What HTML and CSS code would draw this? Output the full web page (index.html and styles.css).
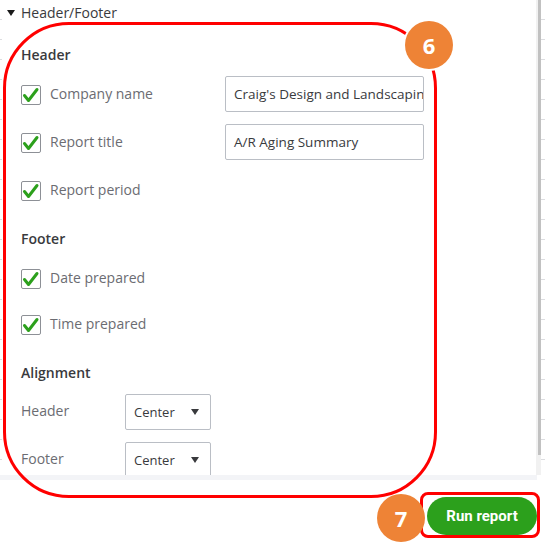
FILE: index.html
```html
<!DOCTYPE html>
<html>
<head>
<meta charset="utf-8">
<link rel="stylesheet" href="styles.css">
</head>
<body>
<div class="page">
  <div class="panel">
    <div class="ticks"></div>
    <div class="content">
      <div class="toggle"><span class="tri"></span><span>Header/Footer</span></div>
      <div class="heading h-header">Header</div>
      <div class="row r1">
        <div class="check-cell"><span class="cb"><svg viewBox="0 0 20 20" width="20" height="20"><path d="M3.5 10.5 L7.5 15.5 L16 4.5" fill="none" stroke="#2ca01c" stroke-width="3" stroke-linecap="round" stroke-linejoin="round"/></svg></span><span class="label">Company name</span></div>
        <div class="input">Craig's Design and Landscaping Services</div>
      </div>
      <div class="row r2">
        <div class="check-cell"><span class="cb"><svg viewBox="0 0 20 20" width="20" height="20"><path d="M3.5 10.5 L7.5 15.5 L16 4.5" fill="none" stroke="#2ca01c" stroke-width="3" stroke-linecap="round" stroke-linejoin="round"/></svg></span><span class="label">Report title</span></div>
        <div class="input">A/R Aging Summary</div>
      </div>
      <div class="row r3">
        <div class="check-cell"><span class="cb"><svg viewBox="0 0 20 20" width="20" height="20"><path d="M3.5 10.5 L7.5 15.5 L16 4.5" fill="none" stroke="#2ca01c" stroke-width="3" stroke-linecap="round" stroke-linejoin="round"/></svg></span><span class="label">Report period</span></div>
      </div>
      <div class="heading h-footer">Footer</div>
      <div class="row r4">
        <div class="check-cell"><span class="cb"><svg viewBox="0 0 20 20" width="20" height="20"><path d="M3.5 10.5 L7.5 15.5 L16 4.5" fill="none" stroke="#2ca01c" stroke-width="3" stroke-linecap="round" stroke-linejoin="round"/></svg></span><span class="label">Date prepared</span></div>
      </div>
      <div class="row r5">
        <div class="check-cell"><span class="cb"><svg viewBox="0 0 20 20" width="20" height="20"><path d="M3.5 10.5 L7.5 15.5 L16 4.5" fill="none" stroke="#2ca01c" stroke-width="3" stroke-linecap="round" stroke-linejoin="round"/></svg></span><span class="label">Time prepared</span></div>
      </div>
      <div class="heading h-align">Alignment</div>
      <div class="arow a1">
        <span class="alabel">Header</span>
        <div class="select"><span>Center</span><span class="arrow"></span></div>
      </div>
      <div class="arow a2">
        <span class="alabel">Footer</span>
        <div class="select"><span>Center</span><span class="arrow"></span></div>
      </div>
    </div>
    <div class="track"><div class="thumb"></div></div>
    <div class="ticks right"></div>
  </div>
  <div class="band"></div>
  <div class="footer">
    <button class="run">Run report</button>
  </div>
</div>
<div class="annot-box"></div>
<div class="badge b6">6</div>
<div class="annot-btn"></div>
<div class="badge b7">7</div>
</body>
</html>
```
FILE: styles.css
```css
html, body {
  margin: 0;
  padding: 0;
  background: #fff;
}
body {
  width: 545px;
  height: 544px;
  overflow: hidden;
  position: relative;
  font-family: "Open Sans", "Liberation Sans", sans-serif;
  font-size: 14px;
  color: #393a3d;
}
.page {
  display: flex;
  flex-direction: column;
  height: 544px;
}
.panel {
  height: 475px;
  flex: none;
  display: flex;
  overflow: hidden;
}
.ticks {
  width: 2px;
  flex: none;
  background: repeating-linear-gradient(to bottom, transparent 0, transparent 19px, #dcdde0 19px, #dcdde0 20px);
}
.ticks.right {
  width: 4px;
  background: repeating-linear-gradient(to bottom, transparent 0, transparent 19px, #dcdde0 19px, #dcdde0 20px);
}
.content {
  flex: 1;
  padding-left: 19px;
  display: flex;
  flex-direction: column;
}
.content > * {
  flex: none;
}
.track {
  width: 5px;
  flex: none;
  background: #f1f1f1;
  display: flex;
  justify-content: flex-end;
}
.thumb {
  width: 3px;
  height: 455px;
  background: #c1c1c1;
}
.toggle {
  height: 24px;
  display: flex;
  align-items: center;
  gap: 6px;
  margin-left: -14px;
  color: #393a3d;
}
.tri {
  width: 0;
  height: 0;
  border-left: 4px solid transparent;
  border-right: 4px solid transparent;
  border-top: 6px solid #1a1a1a;
  margin-top: 1px;
}
.heading {
  height: 20px;
  line-height: 20px;
  font-weight: 600;
  color: #393a3d;
}
.h-header { margin-top: 21px; }
.h-footer { margin-top: 21px; }
.h-align { margin-top: 21px; }
.row {
  height: 36px;
  display: flex;
  align-items: center;
}
.r1 { margin-top: 11px; }
.r2 { margin-top: 12px; }
.r3 { margin-top: 12px; }
.r4 { margin-top: 11px; }
.r5 { margin-top: 10px; }
.check-cell {
  width: 204px;
  display: flex;
  align-items: center;
  gap: 9px;
}
.cb {
  width: 20px;
  height: 20px;
  box-sizing: border-box;
  border: 1px solid #8d9096;
  border-radius: 2px;
  display: flex;
  align-items: center;
  justify-content: center;
  margin-top: 2px;
}
.cb svg {
  flex: none;
}
.label {
  color: #6b6c72;
  margin-top: -2px;
}
.input {
  width: 199px;
  height: 36px;
  box-sizing: border-box;
  border: 1px solid #babec5;
  border-radius: 2px;
  padding: 0 8px;
  line-height: 34px;
  white-space: nowrap;
  overflow: hidden;
  color: #393a3d;
  font-size: 13.5px;
}
.arow {
  height: 36px;
  display: flex;
  align-items: center;
  margin-top: 12px;
}
.a1 { margin-top: 11px; }
.alabel {
  width: 104px;
  color: #6b6c72;
  margin-top: -4px;
}
.select {
  width: 86px;
  height: 36px;
  box-sizing: border-box;
  border: 1px solid #babec5;
  border-radius: 2px;
  display: flex;
  align-items: center;
  justify-content: space-between;
  padding: 0 11px 0 8px;
  font-size: 13px;
  color: #393a3d;
}
.arrow {
  width: 0;
  height: 0;
  border-left: 4px solid transparent;
  border-right: 4px solid transparent;
  border-top: 6px solid #393a3d;
}
.band {
  height: 5px;
  flex: none;
  background: #f3f4f7;
  margin-right: 8px;
}
.footer {
  flex: 1;
  display: flex;
  justify-content: flex-end;
  align-items: flex-start;
  padding: 17px 8px 0 0;
}
.run {
  width: 110px;
  height: 38px;
  border: none;
  border-radius: 19px;
  background: #2ca01c;
  color: #fff;
  font-family: "Roboto", "Liberation Sans", sans-serif;
  font-weight: 700;
  font-size: 15px;
  padding: 0;
}
.annot-box {
  position: absolute;
  left: 3px;
  top: 22px;
  width: 434px;
  height: 476px;
  box-sizing: border-box;
  border: 3px solid #ff0000;
  border-radius: 66px;
}
.annot-btn {
  position: absolute;
  left: 420px;
  top: 492px;
  width: 120px;
  height: 46px;
  box-sizing: border-box;
  border: 3px solid #ff0000;
  border-radius: 8px;
}
.badge {
  position: absolute;
  width: 48px;
  height: 48px;
  border-radius: 50%;
  background: #ee8336;
  color: #fff;
  font-family: "Open Sans", "Liberation Sans", sans-serif;
  font-weight: 700;
  font-size: 22px;
  display: flex;
  align-items: center;
  justify-content: center;
}
.b6 {
  left: 405px;
  top: 21px;
  box-shadow: 0 0 0 2px #fff;
}
.b7 {
  left: 377px;
  top: 494px;
}
```
